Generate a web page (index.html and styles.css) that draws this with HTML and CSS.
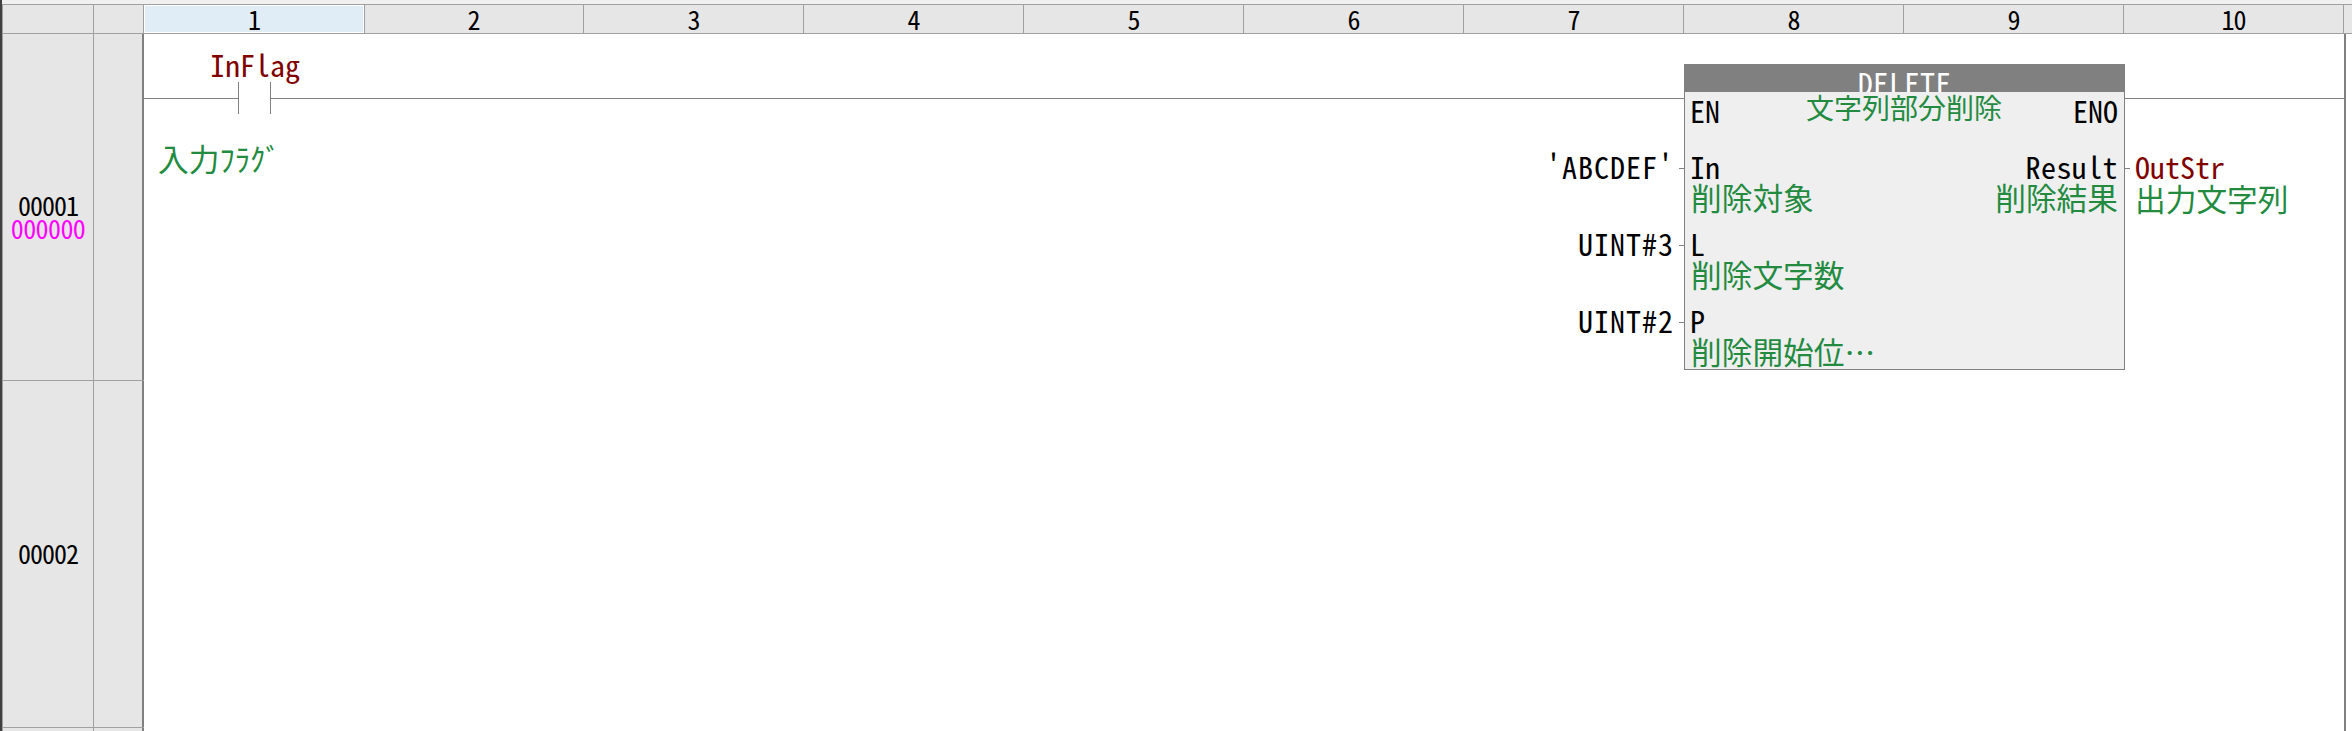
FILE: index.html
```html
<!DOCTYPE html>
<html lang="ja">
<head>
<meta charset="utf-8">
<title>DELETE</title>
<link rel="stylesheet" href="styles.css">
</head>
<body>
<div class="sheet">
  <div class="strip"></div>
  <div class="head">
    <div class="hcell num-col"></div>
    <div class="hcell mark-col"></div>
    <div class="hcell col selected">1</div>
    <div class="hcell col">2</div>
    <div class="hcell col">3</div>
    <div class="hcell col">4</div>
    <div class="hcell col">5</div>
    <div class="hcell col">6</div>
    <div class="hcell col">7</div>
    <div class="hcell col">8</div>
    <div class="hcell col">9</div>
    <div class="hcell col">10</div>
    <div class="hcell rest"></div>
  </div>
  <div class="main">
    <div class="gutter">
      <div class="grow">
        <div class="gcell num-col"><span class="rung-no">00001<span class="step-no">000000</span></span></div>
        <div class="gcell mark-col edge"></div>
      </div>
      <div class="grow">
        <div class="gcell num-col"><span class="rung-no">00002</span></div>
        <div class="gcell mark-col edge"></div>
      </div>
      <div class="grow">
        <div class="gcell num-col"></div>
        <div class="gcell mark-col edge"></div>
      </div>
    </div>
    <div class="canvas">
      <div class="wire wire-a"></div>
      <div class="wire wire-b"></div>
      <div class="contact-bar bar-l"></div>
      <div class="contact-bar bar-r"></div>
      <div class="txt var contact-name">InFlag</div>
      <div class="txt cmt contact-cmt">入力ﾌﾗｸﾞ</div>

      <div class="arg arg-in">'ABCDEF'</div>
      <div class="arg arg-l">UINT#3</div>
      <div class="arg arg-p">UINT#2</div>
      <div class="stub stub-in"></div>
      <div class="stub stub-l"></div>
      <div class="stub stub-p"></div>
      <div class="stub stub-out"></div>

      <div class="block">
        <div class="block-title"><span class="title-text">DELETE</span></div>
        <div class="block-body">
          <div class="pins-top">
            <span class="pin">EN</span>
            <span class="cmt small">文字列部分削除</span>
            <span class="pin">ENO</span>
          </div>
          <div class="pin-row">
            <div class="pin-group"><div class="pin">In</div><div class="cmt">削除対象</div></div>
            <div class="pin-group right"><div class="pin">Result</div><div class="cmt">削除結果</div></div>
          </div>
          <div class="pin-row">
            <div class="pin-group"><div class="pin">L</div><div class="cmt">削除文字数</div></div>
          </div>
          <div class="pin-row">
            <div class="pin-group"><div class="pin">P</div><div class="cmt">削除開始位…</div></div>
          </div>
        </div>
      </div>

      <div class="txt var out-name">OutStr</div>
      <div class="txt cmt out-cmt">出力文字列</div>
    </div>
  </div>
</div>
</body>
</html>
```
FILE: styles.css
```css
* { box-sizing: border-box; }
html, body { margin: 0; padding: 0; background: #fff; }
body {
  width: 2352px;
  height: 731px;
  overflow: hidden;
  font-family: "Noto Sans CJK JP", "Noto Sans", sans-serif;
  font-feature-settings: "hwid";
  color: #000;
}
.sheet {
  display: flex;
  flex-direction: column;
  height: 731px;
  border-left: 2px solid #404040;
}
.strip { height: 4px; background: #f0f0f0; flex: none; }
.head {
  display: flex;
  flex: none;
  height: 30px;
  background: #e6e6e6;
  border-top: 1px solid #a0a0a0;
  border-bottom: 1px solid #a0a0a0;
  font-size: 26px;
  letter-spacing: -1px;
  line-height: 28px;
}
.hcell { flex: none; border-right: 1px solid #a0a0a0; text-align: center; }
.num-col { width: 92px; border-left: 1px solid #a0a0a0; }
.mark-col { width: 50px; }
.col { width: 220px; }
.col.selected { background: #e0ecf6; border: 1px solid #fff; box-shadow: 1px 0 0 #a0a0a0; line-height: 26px; }
.rest { flex: 1; border-right: 0; }

.main { display: flex; flex: 1; min-height: 0; overflow: hidden; }
.gutter { flex: none; width: 142px; display: flex; flex-direction: column; }
.grow {
  display: flex;
  flex: none;
  height: 347px;
  border-bottom: 1px solid #a0a0a0;
  background: #e6e6e6;
}
.gcell {
  border-right: 1px solid #a0a0a0;
  display: flex;
  align-items: center;
  justify-content: center;
  padding-bottom: 3px;
}
.grow:first-child .gcell { padding-bottom: 5px; }
.mark-col.edge { border-right: 2px solid #808080; width: 50px; }
.rung-no { position: relative; font-size: 26px; letter-spacing: -1px; line-height: 24px; }
.step-no { position: absolute; left: 50%; top: 100%; margin-top: -1px; transform: translateX(-50%); color: #ff00ff; white-space: nowrap; letter-spacing: -0.6px; }

.canvas {
  position: relative;
  flex: none;
  width: 2202px;
  background: #fff;
  border-right: 2px solid #808080;
  font-size: 30px;
  line-height: 30px;
}
/* ladder diagram elements: placed on a free canvas (origin 144,34) */
.wire { position: absolute; height: 1px; top: 64px; background: #808080; }
.wire-a { left: 0; width: 94px; }
.wire-b { left: 126px; width: 2074px; }
.contact-bar { position: absolute; top: 48px; width: 1px; height: 32px; background: #808080; }
.bar-l { left: 94px; }
.bar-r { left: 126px; }
.txt { position: absolute; white-space: nowrap; }
.var { color: #800000; }
.cmt { color: #228b40; white-space: nowrap; font-size: 30.7px; }
.contact-name { left: 66px; top: 15px; }
.contact-cmt { left: 14px; top: 109px; }
.arg { position: absolute; right: 670px; white-space: nowrap; letter-spacing: 1px; }
.arg-in { top: 117px; }
.arg-l { top: 194px; }
.arg-p { top: 271px; }
.stub { position: absolute; width: 5px; height: 1px; background: #808080; }
.stub-in { left: 1535px; top: 134px; }
.stub-l { left: 1535px; top: 211px; }
.stub-p { left: 1535px; top: 288px; }
.stub-out { left: 1981px; top: 134px; }
.block {
  position: absolute;
  left: 1540px;
  top: 30px;
  width: 441px;
  height: 306px;
  background: #efefef;
  border: 1px solid #808080;
  border-top: 0;
  display: flex;
  flex-direction: column;
}
.block-title {
  flex: none;
  height: 28px;
  margin: 0 -1px;
  background: #808080;
  color: #fff;
  text-align: center;
  overflow: hidden;
  padding-top: 3px;
  line-height: 30px;
  letter-spacing: 0.6px;
}
.title-text { display: block; }
.block-body { flex: 1; padding: 0 6px; display: flex; flex-direction: column; }
.pins-top { display: flex; justify-content: space-between; height: 59px; }
.pin { color: #000; }
.pin-row .pin-group:not(.right) .pin { margin-left: -1px; }
.pin-group.right .pin { letter-spacing: 0.4px; }
.pins-top .pin { line-height: 30px; margin-top: 3px; margin-left: -1px; }
.small { font-size: 28px; margin-top: 1px; margin-left: 14px; line-height: 28px; }
.pin-row { display: flex; justify-content: space-between; height: 77px; }
.pin-group .cmt { margin-top: 1px; }
.pin-group.right { text-align: right; }
.out-name { left: 1991px; top: 117px; }
.out-cmt { left: 1991px; top: 149px; }
```
